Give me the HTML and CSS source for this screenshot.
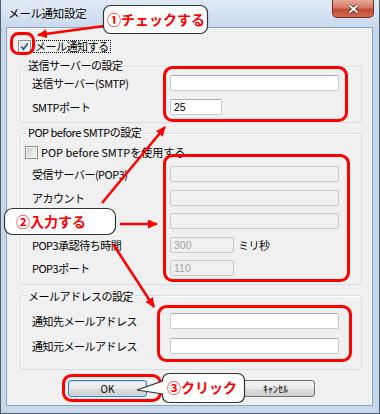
FILE: index.html
```html
<!DOCTYPE html>
<html lang="ja">
<head>
    <meta charset="UTF-8">
    <title>メール通知設定</title>
    <link rel="stylesheet" href="styles.css">
</head>
<body>
<div class="screen">
    <div class="window">
        <div class="titlebar">
            <span class="title">メール通知設定</span>
            <div class="close-btn">
                <svg width="13" height="10" viewBox="0 0 13 10">
                    <path class="x-shadow" d="M2.5 1.5 L10.5 8.5 M10.5 1.5 L2.5 8.5"/>
                    <path class="x-mark" d="M2.5 1.5 L10.5 8.5 M10.5 1.5 L2.5 8.5"/>
                </svg>
            </div>
        </div>

        <div class="client">
            <div class="check-row main-check">
                <span class="checkbox">
                    <svg width="11" height="11" viewBox="0 0 11 11"><path d="M2.2 5.6 L4.5 8.2 L8.8 2.3"/></svg>
                </span>
                <span class="focus-label">メール通知する</span>
            </div>

            <!-- 送信サーバー -->
            <div class="group group-smtp">
                <div class="group-title">送信サーバーの設定</div>
                <div class="rows">
                    <div class="row">
                        <span class="label">送信サーバー(SMTP)</span>
                        <input class="field wide" type="text">
                    </div>
                    <div class="row">
                        <span class="label">SMTPポート</span>
                        <input class="field port" type="text" value="25">
                    </div>
                </div>
            </div>

            <!-- POP before SMTP -->
            <div class="group group-pop">
                <div class="group-title">POP before SMTPの設定</div>
                <div class="check-row pop-check">
                    <span class="checkbox off"></span>
                    <span class="check-label">POP before SMTPを使用する</span>
                </div>
                <div class="rows">
                    <div class="row">
                        <span class="label">受信サーバー(POP3)</span>
                        <input class="field wide" type="text" disabled>
                    </div>
                    <div class="row">
                        <span class="label">アカウント</span>
                        <input class="field wide" type="text" disabled>
                    </div>
                    <div class="row">
                        <!-- ラベルは説明の吹き出しで隠れている -->
                        <span class="label"></span>
                        <input class="field wide" type="password" disabled>
                    </div>
                    <div class="row">
                        <span class="label">POP3承認待ち時間</span>
                        <input class="field short" type="text" value="300" disabled>
                        <span class="unit">ミリ秒</span>
                    </div>
                    <div class="row">
                        <span class="label">POP3ポート</span>
                        <input class="field short" type="text" value="110" disabled>
                    </div>
                </div>
            </div>

            <!-- メールアドレス -->
            <div class="group group-mail">
                <div class="group-title">メールアドレスの設定</div>
                <div class="rows">
                    <div class="row">
                        <span class="label">通知先メールアドレス</span>
                        <input class="field wide" type="text">
                    </div>
                    <div class="row">
                        <span class="label">通知元メールアドレス</span>
                        <input class="field wide" type="text">
                    </div>
                </div>
            </div>

            <div class="buttons">
                <button class="btn btn-default">OK</button>
                <button class="btn">ｷｬﾝｾﾙ</button>
            </div>
        </div>
    </div>

    <!-- 説明の書き込み -->
    <svg class="annotations" width="380" height="414" viewBox="0 0 380 414">
        <defs>
            <marker id="head" markerWidth="10" markerHeight="9" refX="9" refY="4.5" orient="auto" markerUnits="userSpaceOnUse">
                <path d="M0 0 L10 4.5 L0 9 Z" fill="#f00"/>
            </marker>
        </defs>

        <rect class="ring" x="11.5" y="33.5" width="22" height="20" rx="7"/>
        <rect class="ring" x="164.5" y="67.5" width="182" height="53" rx="8"/>
        <rect class="ring" x="164.5" y="155.5" width="184" height="125" rx="8"/>
        <rect class="ring" x="158.5" y="306.5" width="192" height="54" rx="8"/>
        <rect class="ring" x="63.5" y="375.5" width="97" height="25" rx="8"/>

        <line class="arrow" x1="104" y1="26" x2="38" y2="35" marker-end="url(#head)"/>
        <line class="arrow" x1="120" y1="224" x2="157" y2="224" marker-end="url(#head)"/>
        <line class="arrow" x1="102" y1="203" x2="165" y2="127" marker-end="url(#head)"/>
        <line class="arrow" x1="113" y1="244" x2="154" y2="307" marker-end="url(#head)"/>

        <rect class="bubble" x="103.5" y="5.5" width="104" height="28" rx="7"/>
        <text class="bubble-text" x="107" y="25">①チェックする</text>

        <rect class="bubble" x="4.5" y="208.5" width="111" height="26" rx="8"/>
        <text class="bubble-text" x="16" y="227">②入力する</text>

        <path class="bubble" d="M170 373.5 H237 Q244.5 373.5 244.5 381 V395 Q244.5 402.5 237 402.5 H170 Q162.5 402.5 162.5 395 L162.5 394 L137 390 L162.5 381 Q162.5 373.5 170 373.5 Z"/>
        <text class="bubble-text" x="167" y="393">③クリック</text>
    </svg>
</div>
</body>
</html>
```

FILE: styles.css
```css
* {
    box-sizing: border-box;
}

body {
    margin: 0;
    font-family: "Noto Sans CJK JP", "Noto Sans", sans-serif;
    font-size: 11px;
    color: #000;
    background: #fff;
}

.screen {
    position: relative;
    width: 380px;
    height: 414px;
}

.window {
    width: 380px;
    height: 414px;
    display: flex;
    flex-direction: column;
    background: #c6d7ec;
    border: 1px solid #4f5d6e;
    border-top: 0;
}

.titlebar {
    height: 27px;
    display: flex;
    justify-content: space-between;
    align-items: flex-start;
    padding: 0 5px 0 7px;
    background: linear-gradient(#dfe9f5, #c9daee);
}

.title {
    line-height: 27px;
    font-size: 11.5px;
    letter-spacing: -0.3px;
    text-shadow: 0 0 5px #fff;
}

.close-btn {
    width: 42px;
    height: 18px;
    display: flex;
    align-items: center;
    justify-content: center;
    border: 1px solid #6b3227;
    border-top: 0;
    border-radius: 0 0 5px 5px;
    background: linear-gradient(#e7a898, #d67a66 45%, #c44a33 55%, #d0674f);
}

.x-shadow {
    stroke: #4a1a12;
    stroke-width: 3.6;
    fill: none;
}

.x-mark {
    stroke: #fff;
    stroke-width: 2;
    fill: none;
}

.client {
    flex: 1;
    margin: 0 6px 7px 5px;
    border: 1px solid #8ea3bf;
    background: #f0f0f0;
}

/* チェックボックス */
.check-row {
    display: flex;
    align-items: center;
    height: 13px;
}

.main-check {
    margin: 12px 0 0 11px;
}

.pop-check {
    margin: 7px 0 0 4px;
}

.checkbox {
    width: 13px;
    height: 13px;
    border: 1px solid #8e8f8f;
    background: linear-gradient(135deg, #dcdddf, #fdfdfd);
    box-shadow: inset 0 0 0 1px #f4f4f4;
    display: flex;
    align-items: center;
    justify-content: center;
}

.checkbox svg path {
    fill: none;
    stroke: #3a5694;
    stroke-width: 1.8;
}

.checkbox.off {
    background: linear-gradient(135deg, #cfd0d2, #f6f6f6);
}

.focus-label {
    margin-left: 2px;
    height: 13px;
    line-height: 11px;
    padding: 0 1px;
    border: 1px dotted #000;
    letter-spacing: -0.5px;
}

.check-label {
    margin-left: 3px;
    line-height: 13px;
}

/* グループボックス */
.group {
    margin: 13px 10px 0 13px;
    border: 1px solid #d5dfe5;
    border-radius: 3px;
    box-shadow: inset 1px 1px 0 #fff;
}

.group-title {
    display: table;
    margin: -9px 0 0 5px;
    padding: 0 2px;
    line-height: 14px;
    background: #f0f0f0;
    letter-spacing: -0.5px;
}

.group-smtp {
    padding-bottom: 7px;
}

.group-smtp .rows {
    margin-top: 3px;
    gap: 8px;
}

.group-pop {
    margin-top: 10px;
    padding-bottom: 8px;
}

.group-pop .rows {
    margin-top: 7px;
    gap: 7.5px;
}

.group-mail {
    margin-top: 10px;
    padding-bottom: 15px;
}

.group-mail .group-title {
    margin-top: -7px;
}

.group-mail .rows {
    margin-top: 10px;
    gap: 9px;
}

.rows {
    display: flex;
    flex-direction: column;
}

.row {
    display: flex;
    align-items: center;
    height: 16px;
}

.label {
    width: 149px;
    flex-shrink: 0;
    padding-left: 11px;
    letter-spacing: -0.5px;
    white-space: nowrap;
}

.field {
    height: 16px;
    margin: 0;
    padding: 0 3px;
    border: 1px solid #c6cad2;
    border-top-color: #a9acb3;
    border-radius: 2px;
    background: #fff;
    font-family: "Liberation Sans", sans-serif;
    font-size: 10.5px;
    color: #000;
    outline: none;
}

.field:disabled {
    background: #f0f0f0;
    border-color: #c9c9c9;
    color: #a2a2a2;
}

.field.wide {
    width: 169px;
}

.field.port {
    width: 52px;
}

.field.short {
    width: 64px;
}

.unit {
    margin-left: 4px;
    letter-spacing: -0.5px;
}

/* ボタン */
.buttons {
    display: flex;
    gap: 89px;
    margin-top: 10px;
    padding-left: 61px;
}

.btn {
    width: 79px;
    height: 17px;
    padding: 0;
    border: 1px solid #707070;
    border-radius: 3px;
    background: linear-gradient(#f2f2f2, #ebebeb 50%, #dddddd 50%, #cfcfcf);
    font-family: "Noto Sans CJK JP", sans-serif;
    font-size: 10px;
    line-height: 15px;
    color: #000;
}

.btn-default {
    border-color: #3c7fb1;
    box-shadow: inset 0 0 0 1px #bfe6fb;
}

/* 説明の書き込み */
.annotations {
    position: absolute;
    left: 0;
    top: 0;
    pointer-events: none;
}

.ring {
    fill: none;
    stroke: #f00;
    stroke-width: 3;
}

.arrow {
    stroke: #f00;
    stroke-width: 2.5;
}

.bubble {
    fill: #fff;
    stroke: #333;
    stroke-width: 1.2;
}

.bubble-text {
    fill: #f00;
    font-family: "Noto Sans CJK JP", sans-serif;
    font-size: 14px;
    font-weight: 700;
}
```
